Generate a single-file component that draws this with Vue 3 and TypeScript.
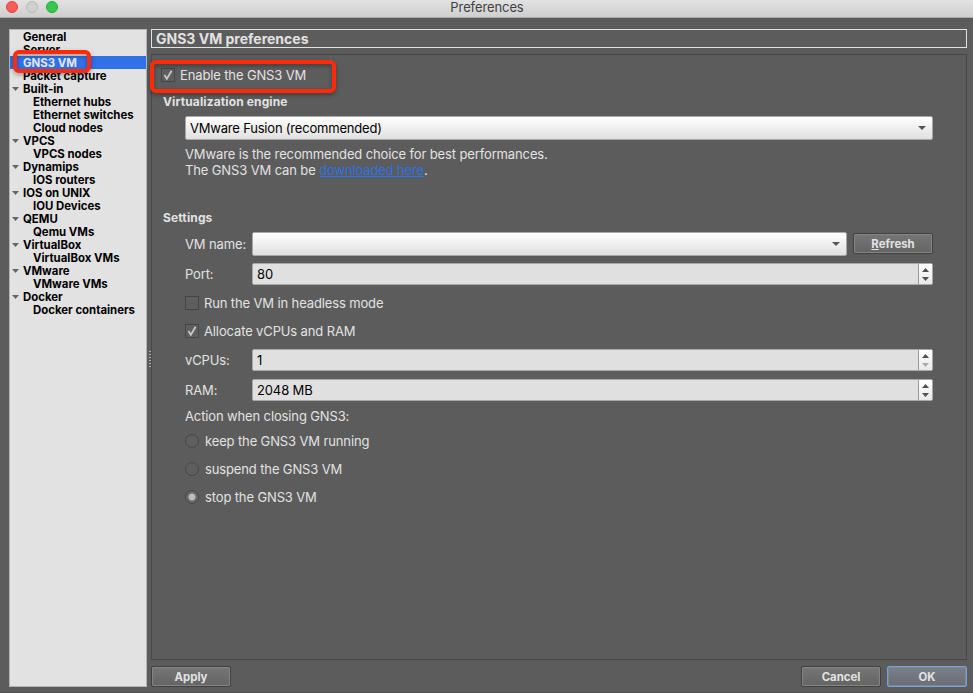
<script setup lang="ts">
import { ref } from 'vue'

interface TreeRow {
  label: string
  kind: 'leaf' | 'group' | 'child'
}

const rows: TreeRow[] = [
  { label: 'General', kind: 'leaf' },
  { label: 'Server', kind: 'leaf' },
  { label: 'GNS3 VM', kind: 'leaf' },
  { label: 'Packet capture', kind: 'leaf' },
  { label: 'Built-in', kind: 'group' },
  { label: 'Ethernet hubs', kind: 'child' },
  { label: 'Ethernet switches', kind: 'child' },
  { label: 'Cloud nodes', kind: 'child' },
  { label: 'VPCS', kind: 'group' },
  { label: 'VPCS nodes', kind: 'child' },
  { label: 'Dynamips', kind: 'group' },
  { label: 'IOS routers', kind: 'child' },
  { label: 'IOS on UNIX', kind: 'group' },
  { label: 'IOU Devices', kind: 'child' },
  { label: 'QEMU', kind: 'group' },
  { label: 'Qemu VMs', kind: 'child' },
  { label: 'VirtualBox', kind: 'group' },
  { label: 'VirtualBox VMs', kind: 'child' },
  { label: 'VMware', kind: 'group' },
  { label: 'VMware VMs', kind: 'child' },
  { label: 'Docker', kind: 'group' },
  { label: 'Docker containers', kind: 'child' },
]

const selected = ref('GNS3 VM')
const enabled = ref(true)
const headless = ref(false)
const allocate = ref(true)
const action = ref(2)
const actions = ['keep the GNS3 VM running', 'suspend the GNS3 VM', 'stop the GNS3 VM']
</script>

<template>
  <div class="window">
    <header class="titlebar">
      <div class="lights"><i class="red"></i><i class="grey"></i><i class="green"></i></div>
      <span>Preferences</span>
    </header>
    <div class="body">
      <nav class="tree">
        <div
          v-for="row in rows"
          :key="row.label"
          class="row"
          :class="[row.kind, { selected: row.label === selected }]"
          @click="selected = row.label"
        >
          <svg v-if="row.kind === 'group'" class="twist" viewBox="0 0 7 4"><path d="M0 0H7L3.5 4Z" /></svg>
          <span>{{ row.label }}</span>
        </div>
        <div class="mark mark-tree"></div>
      </nav>
      <div class="splitter"><i></i></div>
      <main class="main">
        <h1>GNS3 VM preferences</h1>
        <section class="panel">
          <div class="mark mark-enable"></div>
          <div class="check enable" @click="enabled = !enabled">
            <span class="box"><svg v-if="enabled" viewBox="0 0 12 12"><path d="M2.5 6L4.8 9.9L9.6 1.8" /></svg></span>
            <span>Enable the GNS3 VM</span>
          </div>
          <h2>Virtualization engine</h2>
          <div class="combo engine">
            <span>VMware Fusion (recommended)</span>
            <svg viewBox="0 0 8 4"><path d="M0 0H8L4 4Z" /></svg>
          </div>
          <p class="note">
            <span>VMware is the recommended choice for best performances.</span><br />
            The GNS3 VM can be <a>downloaded here</a>.
          </p>
          <h2 class="settings">Settings</h2>
          <div class="form">
            <div class="field">
              <label>VM name:</label>
              <div class="combo"><svg viewBox="0 0 8 4"><path d="M0 0H8L4 4Z" /></svg></div>
              <button class="refresh"><u>R</u>efresh</button>
            </div>
            <div class="field port">
              <label>Port:</label>
              <div class="spin">
                <span>80</span>
                <div class="steps">
                  <svg viewBox="0 0 7 4"><path d="M0 4H7L3.5 0Z" /></svg>
                  <svg viewBox="0 0 7 4"><path d="M0 0H7L3.5 4Z" /></svg>
                </div>
              </div>
            </div>
            <div class="check headless" @click="headless = !headless">
              <span class="box"><svg v-if="headless" viewBox="0 0 12 12"><path d="M2.5 6L4.8 9.9L9.6 1.8" /></svg></span>
              <span>Run the VM in headless mode</span>
            </div>
            <div class="check allocate" @click="allocate = !allocate">
              <span class="box"><svg v-if="allocate" viewBox="0 0 12 12"><path d="M2.5 6L4.8 9.9L9.6 1.8" /></svg></span>
              <span>Allocate vCPUs and RAM</span>
            </div>
            <div class="field vcpus">
              <label>vCPUs:</label>
              <div class="spin">
                <span>1</span>
                <div class="steps">
                  <svg viewBox="0 0 7 4"><path d="M0 4H7L3.5 0Z" /></svg>
                  <svg class="off" viewBox="0 0 7 4"><path d="M0 0H7L3.5 4Z" /></svg>
                </div>
              </div>
            </div>
            <div class="field ram">
              <label>RAM:</label>
              <div class="spin">
                <span>2048 MB</span>
                <div class="steps">
                  <svg viewBox="0 0 7 4"><path d="M0 4H7L3.5 0Z" /></svg>
                  <svg viewBox="0 0 7 4"><path d="M0 0H7L3.5 4Z" /></svg>
                </div>
              </div>
            </div>
            <div class="closing">Action when closing GNS3:</div>
            <div v-for="(label, i) in actions" :key="label" class="radio" @click="action = i">
              <span class="dot" :class="{ on: action === i }"></span>
              <span>{{ label }}</span>
            </div>
          </div>
        </section>
        <footer class="buttons">
          <button>Apply</button>
          <div class="gap"></div>
          <button>Cancel</button>
          <button class="primary">OK</button>
        </footer>
      </main>
    </div>
  </div>
</template>

<style>
body {
  margin: 0;
  background: #5c5c5c;
}
</style>

<style scoped>
* {
  box-sizing: border-box;
}
.window {
  width: 973px;
  height: 693px;
  display: flex;
  flex-direction: column;
  overflow: hidden;
  background: #5c5c5c;
  color: #e2e2e2;
  font: 13px/16px Inter, 'Liberation Sans', sans-serif;
  letter-spacing: -0.13px;
  border-bottom: 1px solid #515151;
  cursor: default;
}
.titlebar {
  position: relative;
  height: 18px;
  flex: none;
  padding-left: 1px;
  background: linear-gradient(#e2e2e2, #cfcfcf);
  border-bottom: 1px solid #aaa;
  color: #414141;
  text-align: center;
  line-height: 15px;
  letter-spacing: -0.1px;
}
.lights {
  position: absolute;
  left: 6px;
  top: 1px;
  display: flex;
  gap: 8px;
}
.lights i {
  width: 12px;
  height: 12px;
  border-radius: 50%;
  border: 1px solid;
}
.lights .red {
  background: #fc5b57;
  border-color: #e2443f;
}
.lights .grey {
  background: #d0d0d0;
  border-color: #bababa;
}
.lights .green {
  background: #35c84a;
  border-color: #27aa35;
}
.body {
  flex: 1;
  display: flex;
  padding: 11px 6px 5px 9px;
}
.tree {
  position: relative;
  width: 138px;
  background: #e2e2e2;
  border: 1px solid #b4b4b4;
  color: #000;
  font-size: 11.4px;
  font-weight: 700;
  line-height: 13px;
  letter-spacing: 0;
}
.row {
  height: 13px;
  display: flex;
  align-items: center;
  padding-left: 13px;
  white-space: nowrap;
}
.row span {
  position: relative;
  top: 1px;
}
.row.group {
  padding-left: 2px;
}
.row.child {
  padding-left: 23px;
}
.row.selected {
  background: #3071e8;
  color: #e8e8e8;
}
.twist {
  width: 7px;
  height: 4px;
  margin-right: 4px;
  fill: #666;
}
.mark {
  position: absolute;
  z-index: 2;
  border: 4px solid #ff2a0b;
  border-radius: 6px;
  pointer-events: none;
  filter: drop-shadow(0 2px 2px rgba(0, 0, 0, 0.35));
}
.mark-tree {
  left: 3px;
  top: 20px;
  width: 78px;
  height: 23px;
}
.mark-enable {
  left: -2px;
  top: 5px;
  width: 186px;
  height: 33px;
}
.splitter {
  width: 4px;
  display: flex;
  align-items: center;
  justify-content: flex-end;
}
.splitter i {
  width: 2px;
  height: 17px;
  background: repeating-linear-gradient(#b0b0b0 0 1px, transparent 1px 3px);
  margin-top: 3px;
}
.main {
  flex: 1;
  display: flex;
  flex-direction: column;
}
h1 {
  margin: 0;
  height: 19px;
  border: 1px solid #e2e2e2;
  padding-left: 4px;
  font-size: 14px;
  font-weight: 700;
  line-height: 18px;
  letter-spacing: 0;
}
.panel {
  position: relative;
  flex: 1;
  margin: 6px 0;
  padding: 13px 33px 0 10px;
  border: 1px solid #484848;
}
.check,
.radio {
  display: flex;
  align-items: center;
  height: 14px;
  gap: 5px;
}
.box {
  width: 14px;
  height: 14px;
  border: 1px solid #464646;
  background: #5f5f5f;
}
.box svg {
  display: block;
  width: 12px;
  height: 12px;
  fill: none;
  stroke: #ccc;
  stroke-width: 1.7;
}
.enable {
  margin-left: -1px;
}
h2 {
  margin: 12px 0 0 1px;
  font-size: 12px;
  font-weight: 700;
  line-height: 16px;
  letter-spacing: 0.13px;
}
.combo {
  display: flex;
  align-items: center;
  justify-content: space-between;
  height: 24px;
  padding: 0 6px 0 4px;
  border: 1px solid #a8a8a8;
  border-radius: 2px;
  background: linear-gradient(#fff, #e0e0e0);
  color: #000;
  letter-spacing: -0.2px;
}
.combo svg {
  width: 8px;
  height: 4px;
  margin-left: auto;
  fill: #555;
}
.engine {
  margin: 6px 0 0 23px;
}
.note {
  margin: 6px 0 0 23px;
}
.note a {
  color: #2b72e8;
  text-decoration: underline;
}
.settings {
  margin: 32px 0 6px 1px;
}
.form {
  padding-left: 23px;
}
.field {
  display: flex;
  align-items: center;
}
.field label {
  width: 67px;
}
.field .combo {
  width: 595px;
}
button {
  width: 80px;
  height: 21px;
  padding: 1px 0 0;
  border: 1px solid #404040;
  border-radius: 2px;
  background: linear-gradient(#767676, #646464);
  box-shadow: inset 0 0 0 1px #858585;
  color: #e2e2e2;
  font: 700 11.4px/18px Inter, sans-serif;
}
.refresh {
  margin: -1px 0 0 6px;
}
.spin {
  flex: 1;
  height: 22px;
  display: flex;
  border: 1px solid #a8a8a8;
  border-radius: 2px;
  background: #e0e0e0;
  color: #000;
  padding-left: 4px;
  line-height: 21px;
}
.steps {
  width: 14px;
  margin-left: auto;
  border-left: 1px solid #999;
  background: linear-gradient(#fff, #e9e9e9);
  display: flex;
  flex-direction: column;
  align-items: center;
  justify-content: center;
  gap: 5px;
}
.steps svg {
  width: 7px;
  height: 4px;
  fill: #505050;
}
.steps .off {
  fill: #aaa;
}
.port {
  margin-top: 7px;
}
.headless {
  margin-top: 11px;
}
.allocate {
  margin-top: 14px;
}
.vcpus {
  margin-top: 11px;
}
.ram {
  margin-top: 8px;
}
.closing {
  margin: 7px 0 10px;
}
.radio {
  margin-bottom: 14px;
  gap: 6px;
}
.dot {
  width: 14px;
  height: 14px;
  border: 1px solid #464646;
  border-radius: 50%;
  background: #5e5e5e;
}
.dot.on {
  background: radial-gradient(circle, #bcbcbc 0 3px, #666 4px);
}
.buttons {
  display: flex;
  gap: 6px;
}
.gap {
  flex: 1;
}
.primary {
  border-color: #6aa3ee;
  background: linear-gradient(#7b8088, #686d76);
}
</style>
